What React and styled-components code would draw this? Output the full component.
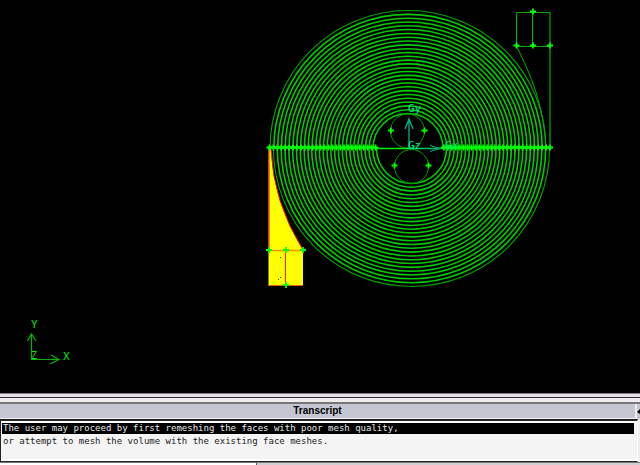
import React from 'react';
import styled, { createGlobalStyle } from 'styled-components';

const GlobalStyle = createGlobalStyle`
  body {
    margin: 0;
    background: #000;
  }
`

const Window = styled.main`
  display: flex;
  flex-direction: column;
  min-height: 100vh;
`

const Viewport = styled.section`
  flex: 1;
  display: flex;
  background: #000;
`

const Drawing = styled.svg`
  display: block;
  width: 100%;
  height: auto;
  fill: none;
  stroke: #00c800;
`

const Label = styled.text`
  font-family: 'DejaVu Sans Mono', monospace;
  font-size: ${({ $size }) => $size || 11}px;
  fill: ${({ $color }) => $color || '#00e800'};
  stroke: none;
`

const Sash = styled.div`
  height: 3px;
  background: #e6dfe4;
  border-top: 1px solid #858085;
  border-bottom: 1px solid #2c2a30;
`

const Panel = styled.section`
  background: #f0eeec;
  padding-top: 4px;
`

const TitleBar = styled.header`
  display: flex;
  align-items: stretch;
  height: 15px;
  background: #f0eeec;
  border-top: 2px solid #77757a;
`

const Title = styled.h2`
  flex: 1;
  margin: 0 2px 1px 0;
  background: #c4c6d2;
  color: #000;
  font-family: 'Liberation Sans', Arial, sans-serif;
  font-size: 10px;
  line-height: 14px;
  text-align: center;
`

const ExpandButton = styled.button`
  width: 3px;
  padding: 0;
  border: 0;
  background: #c4c6d2;
  color: #000;
  display: flex;
  align-items: center;
  overflow: hidden;
`

const Log = styled.div`
  height: 38px;
  margin-right: 2px;
  padding: 2px 3px 0 1px;
  background: #f4f4f4;
  border: 1px solid #222;
  border-top-width: 2px;
  border-right: 1px solid #fff;
  box-shadow: inset 0 2px #fff, inset 0 -2px #fff;
`

const Line = styled.p`
  margin: 0 0 2px;
  padding-left: 1px;
  font-family: 'DejaVu Sans Mono', 'Liberation Mono', monospace;
  font-size: 9px;
  line-height: 11px;
  white-space: pre;
  overflow: hidden;
  color: ${({ $selected }) => ($selected ? '#e8e8e8' : '#222')};
  background: ${({ $selected }) => ($selected ? '#000' : 'transparent')};
`

const Footer = styled.footer`
  display: flex;
  height: 2px;
  border-top: 1px solid #77757a;
`

const FooterField = styled.div`
  flex: 2;
  background: #fff;
  border-right: 1px solid #555;
`

const FooterFill = styled.div`
  flex: 3;
  background: #d0d0d2;
`

const TURNS = 27;
const OUTER = 138;
const INNER = 35;
const PITCH = (OUTER - INNER) / TURNS;

const radii = Array.from({ length: TURNS + 1 }, (_, i) => OUTER - i * PITCH);

const upperArc = r => `M${408 - r} 148.5A${r} ${r} 0 0 1 ${408 + r} 148.5`;
const lowerArc = r => `M${411.5 - r} 148.5A${r} ${r} 0 0 0 ${411.5 + r} 148.5`;
const rim = upperArc(OUTER) + lowerArc(OUTER);
const turns = radii.slice(1).map(r => upperArc(r) + lowerArc(r)).join('');

const seamMarks = [
  ...radii.map((r, i) => [269.5 + (i * 106) / TURNS, 147.5]),
  ...radii.map((r, i) => [444 + (i * 106) / TURNS, 147.5]),
];

const vertices = [
  [391, 130.5], [424.5, 130.5], [394.5, 165.5], [428.5, 165.5],
  [533, 11.5], [516.5, 45.5], [533, 45.5], [550, 45.5],
  [269, 250], [286, 250], [303, 250], [286, 285],
];

const cross = ([x, y]) => `M${x - 3} ${y}h6M${x} ${y - 3}v6`;

const Spiral = () => (
  <g>
    <path d={rim} stroke="#00a800" strokeWidth="1.1" />
    <path d={turns} stroke="#00cc00" strokeWidth="1.6" />
    <circle cx="407.5" cy="131" r="17" stroke="#009800" />
    <circle cx="411.5" cy="166.5" r="17" stroke="#009800" />
    <path d="M375 148.5H444" stroke="#00f000" strokeWidth="1.5" />
    <path d="M268 147.5H376M444 147.5H551" stroke="#0f0" strokeWidth="2.4" />
  </g>
);

const Outlet = () => (
  <g>
    <path d="M516.5 12.5H550V45.5M516.5 12.5V46.5H550M532.5 12V46" stroke="#00a800" strokeWidth="1.2" />
    <path d="M550 46V148" stroke="#009000" strokeWidth="1.5" />
    <path d="M517 47C531 76 543 102 546 148" stroke="#00b400" />
  </g>
);

const SelectedVolume = () => (
  <g>
    <path d="M268.500 149H271Q273 202 303 250V286H268.500Z" fill="#ff0" stroke="none" />
    <path d="M269 149V250M271 149Q273 202 303 250M285.500 251V285" stroke="#f02000" />
    <path d="M269 250.500H303" stroke="#ff9000" strokeWidth="1.500" />
    <path d="M268 285.500H303" stroke="#f06000" />
    <path d="M280 257.500h1M280 277.500h1M278 279.500h1" stroke="#333300" />
  </g>
);

const GlobalAxes = () => (
  <g stroke="#00b488">
    <path d="M409 148V118M405 129L409 119L413 129" strokeWidth="1.3" />
    <path d="M409 148.5H441M430 145.500L440 148.500L430 151.500" />
    <Label x="408" y="112" $color="#00e8a8">Gy</Label>
    <Label x="408" y="149" $color="#00e8a8">Gz</Label>
    <Label x="445" y="149" $color="#00e890">Gx</Label>
  </g>
);

const CornerAxes = () => (
  <g stroke="#00b400">
    <path d="M31.5 360V334M27.500 341L31.500 334L36 341" strokeWidth="1.2" />
    <path d="M31.5 359.500H59M51 355L59 359.500L50 364" strokeWidth="1.2" />
    <Label x="31" y="328">Y</Label>
    <Label x="63" y="360">X</Label>
    <Label x="31" y="359" $size={10}>Z</Label>
  </g>
);

const ModelView = () => (
  <Viewport>
    <Drawing viewBox="0 0 640 393" preserveAspectRatio="xMinYMin meet">
      <Spiral />
      <Outlet />
      <SelectedVolume />
      <path d={seamMarks.map(cross).join('')} stroke="#0f0" strokeWidth="1.8" />
      <path d={vertices.map(cross).join('')} stroke="#0f0" strokeWidth="1.8" />
      <GlobalAxes />
      <CornerAxes />
    </Drawing>
  </Viewport>
);

const Transcript = () => (
  <Panel>
    <TitleBar>
      <Title>Transcript</Title>
      <ExpandButton type="button" aria-label="Expand">
        <svg width="3" height="5" viewBox="0 0 3 5">
          <path d="M0 3L3 0V5Z" />
        </svg>
      </ExpandButton>
    </TitleBar>
    <Log role="log">
      <Line $selected>The user may proceed by first remeshing the faces with poor mesh quality,</Line>
      <Line>or attempt to mesh the volume with the existing face meshes.</Line>
    </Log>
    <Footer>
      <FooterField />
      <FooterFill />
    </Footer>
  </Panel>
);

const App = () => (
  <Window>
    <GlobalStyle />
    <ModelView />
    <Sash />
    <Transcript />
  </Window>
);

export default App;
